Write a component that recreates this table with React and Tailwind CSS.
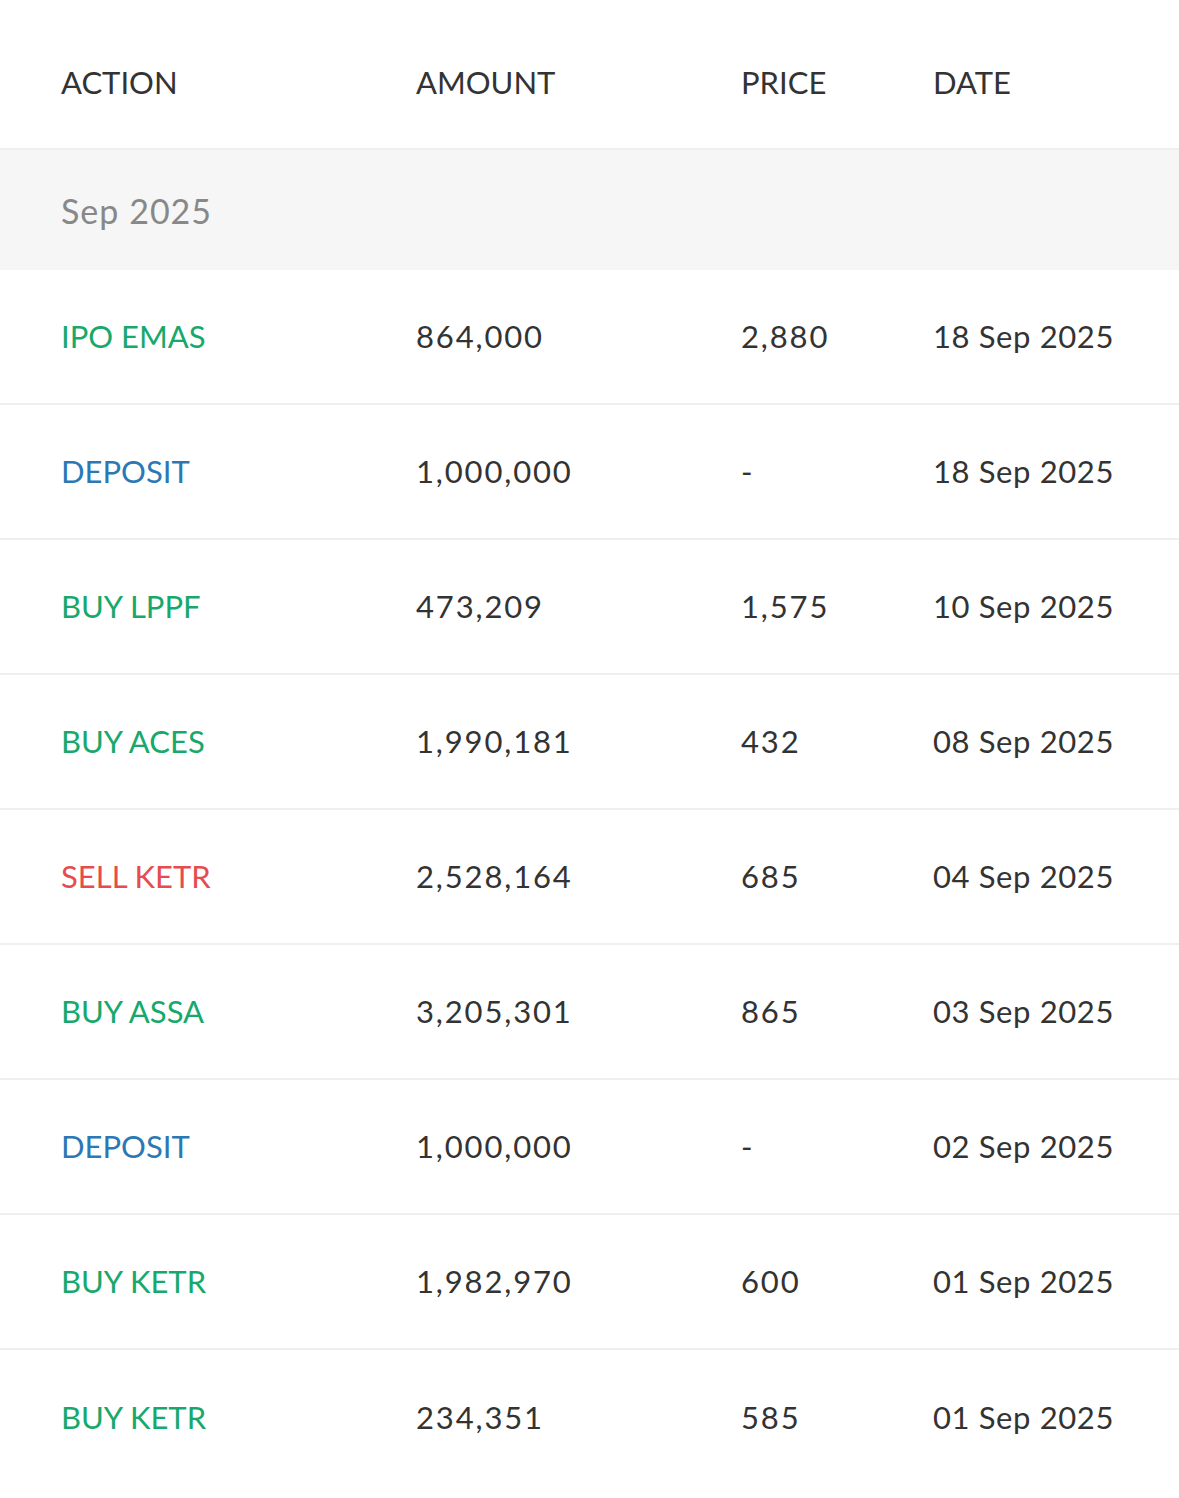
const rows = [
  { action: 'IPO EMAS', tone: 'green', amount: '864,000', price: '2,880', date: '18 Sep 2025' },
  { action: 'DEPOSIT', tone: 'blue', amount: '1,000,000', price: '-', date: '18 Sep 2025' },
  { action: 'BUY LPPF', tone: 'green', amount: '473,209', price: '1,575', date: '10 Sep 2025' },
  { action: 'BUY ACES', tone: 'green', amount: '1,990,181', price: '432', date: '08 Sep 2025' },
  { action: 'SELL KETR', tone: 'red', amount: '2,528,164', price: '685', date: '04 Sep 2025' },
  { action: 'BUY ASSA', tone: 'green', amount: '3,205,301', price: '865', date: '03 Sep 2025' },
  { action: 'DEPOSIT', tone: 'blue', amount: '1,000,000', price: '-', date: '02 Sep 2025' },
  { action: 'BUY KETR', tone: 'green', amount: '1,982,970', price: '600', date: '01 Sep 2025' },
  { action: 'BUY KETR', tone: 'green', amount: '234,351', price: '585', date: '01 Sep 2025' },
];

const toneClass = {
  green: 'text-[#17a86c]',
  blue: 'text-[#2b78b5]',
  red: 'text-[#e64c4f]',
};

const cols = 'grid grid-cols-[355px_325px_192px_1fr] pl-[61px] items-center';

export default function App() {
  return (
    <div className="w-[1179px] min-h-[1498px] bg-white font-['Lato',sans-serif] text-[31px] text-[#333]">
      <div className={`${cols} h-[150px] pt-4 border-b-2 border-[#efefef]`}>
        <div>ACTION</div>
        <div>AMOUNT</div>
        <div>PRICE</div>
        <div>DATE</div>
      </div>

      <div className="h-[120px] bg-[#f6f6f6] pl-[61px] flex items-center text-[34px] tracking-[0.03em] text-[#888]">
        Sep 2025
      </div>

      {rows.map((r, i) => (
        <div
          key={i}
          className={`${cols} h-[135px] ${i < rows.length - 1 ? 'border-b-2 border-[#efefef]' : ''}`}
        >
          <div className={toneClass[r.tone]}>{r.action}</div>
          <div className="tracking-[0.06em]">{r.amount}</div>
          <div className="tracking-[0.06em]">{r.price}</div>
          <div className="tracking-[0.02em]">{r.date}</div>
        </div>
      ))}
    </div>
  );
}
